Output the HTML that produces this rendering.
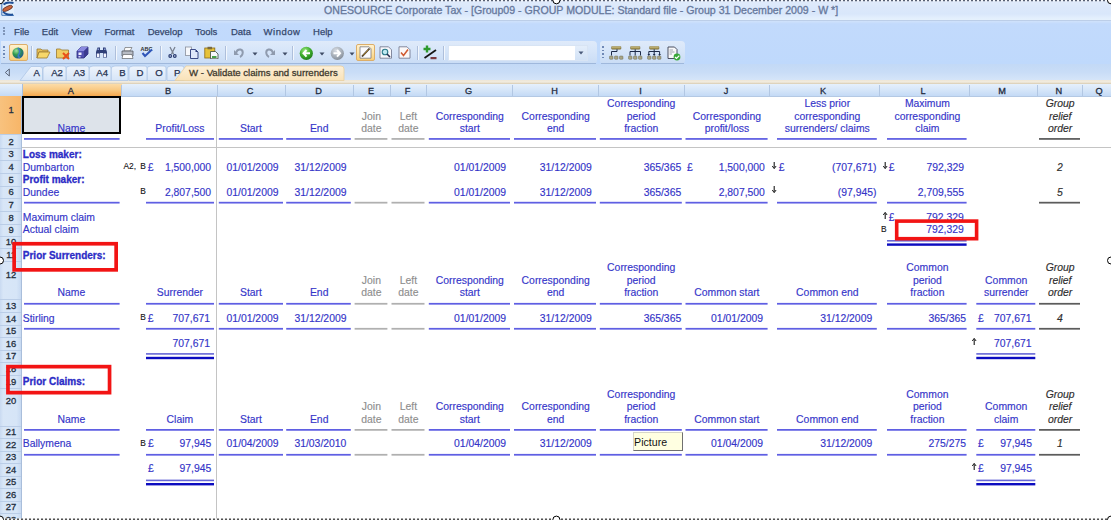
<!DOCTYPE html><html><head><meta charset="utf-8"><style>html,body{margin:0;padding:0}body{width:1111px;height:520px;position:relative;overflow:hidden;background:#fff;font-family:'Liberation Sans', sans-serif}</style></head><body>
<div style="position:absolute;left:0px;top:0px;width:1111px;height:20px;background:linear-gradient(#e0ebfb 0%,#dbe8fb 40%,#d9e7fb 70%,#e3effd 90%,#e6f1fd 100%);"></div>
<div style="position:absolute;left:0px;top:20px;width:1111px;height:1px;background:#bccee8;"></div>
<div style="position:absolute;left:0px;top:21px;width:1111px;height:43px;background:linear-gradient(#d0e2fb 0px,#c2dafc 3px,#bfd9fc 100%);"></div>
<div style="position:absolute;left:1px;top:41px;width:596px;height:23px;background:linear-gradient(#dfeafa 0%,#d6e5f9 45%,#c9dcf5 100%);border-radius:0 4px 4px 0;"></div>
<div style="position:absolute;left:1px;top:63px;width:595px;height:1px;background:#9fb8dc;"></div>
<div style="position:absolute;left:600px;top:41px;width:85px;height:23px;background:linear-gradient(#dfeafa 0%,#d6e5f9 45%,#c9dcf5 100%);border-radius:3px 4px 4px 3px;"></div>
<div style="position:absolute;left:601px;top:63px;width:83px;height:1px;background:#9fb8dc;"></div>
<div style="position:absolute;left:0px;top:64px;width:1111px;height:17px;background:linear-gradient(#c3d9f6 0%,#c9ddf7 50%,#d7e6f9 100%);"></div>
<div style="position:absolute;left:0px;top:80px;width:1111px;height:4px;background:linear-gradient(#eee6d6 0%,#f2ecdf 50%,#d8cbb0 100%);"></div>
<div style="position:absolute;top:0px;font:normal normal 10.6px 'Liberation Sans', sans-serif;line-height:20px;white-space:nowrap;color:#66789c;-webkit-text-stroke:0.3px #66789c;left:324.0px">ONESOURCE Corporate Tax - [Group09 - GROUP MODULE: Standard file - Group 31 December 2009 - W *]</div>
<svg style="position:absolute;left:0;top:0" width="18" height="18" viewBox="0 0 18 18">
<rect x="1.5" y="2" width="12.5" height="13.5" fill="#e4f0fb"/>
<path d="M1.8 2.5 V15.3 H14" stroke="#3f74b8" stroke-width="1" fill="none"/>
<path d="M3.5 4.5 Q7 1.5 13.5 3" stroke="#1e4f98" stroke-width="2" fill="none"/>
<path d="M3 11.5 Q6 15.5 13 14.5" stroke="#1e4f98" stroke-width="2" fill="none"/>
<ellipse cx="7.6" cy="8.4" rx="5.3" ry="2" transform="rotate(-25 7.6 8.4)" fill="#c8643c" stroke="#5a2a20" stroke-width="0.7"/>
</svg>
<div style="position:absolute;left:3px;top:27px;width:2px;height:2px;background:#7f95b8;"></div>
<div style="position:absolute;left:3px;top:30px;width:2px;height:2px;background:#7f95b8;"></div>
<div style="position:absolute;left:3px;top:33px;width:2px;height:2px;background:#7f95b8;"></div>
<div style="position:absolute;top:22px;font:normal normal 9.5px 'Liberation Sans', sans-serif;line-height:20px;white-space:nowrap;color:#34476c;-webkit-text-stroke:0.25px #34476c;left:14.1px">File</div>
<div style="position:absolute;top:22px;font:normal normal 9.5px 'Liberation Sans', sans-serif;line-height:20px;white-space:nowrap;color:#34476c;-webkit-text-stroke:0.25px #34476c;left:41.8px">Edit</div>
<div style="position:absolute;top:22px;font:normal normal 9.5px 'Liberation Sans', sans-serif;line-height:20px;white-space:nowrap;color:#34476c;-webkit-text-stroke:0.25px #34476c;left:71.4px">View</div>
<div style="position:absolute;top:22px;font:normal normal 9.5px 'Liberation Sans', sans-serif;line-height:20px;white-space:nowrap;color:#34476c;-webkit-text-stroke:0.25px #34476c;left:104.4px">Format</div>
<div style="position:absolute;top:22px;font:normal normal 9.5px 'Liberation Sans', sans-serif;line-height:20px;white-space:nowrap;color:#34476c;-webkit-text-stroke:0.25px #34476c;left:147.7px">Develop</div>
<div style="position:absolute;top:22px;font:normal normal 9.5px 'Liberation Sans', sans-serif;line-height:20px;white-space:nowrap;color:#34476c;-webkit-text-stroke:0.25px #34476c;left:195.2px">Tools</div>
<div style="position:absolute;top:22px;font:normal normal 9.5px 'Liberation Sans', sans-serif;line-height:20px;white-space:nowrap;color:#34476c;-webkit-text-stroke:0.25px #34476c;left:230.9px">Data</div>
<div style="position:absolute;top:22px;font:normal normal 9.5px 'Liberation Sans', sans-serif;line-height:20px;white-space:nowrap;color:#34476c;-webkit-text-stroke:0.25px #34476c;letter-spacing:0.5px;left:263.6px">Window</div>
<div style="position:absolute;top:22px;font:normal normal 9.5px 'Liberation Sans', sans-serif;line-height:20px;white-space:nowrap;color:#34476c;-webkit-text-stroke:0.25px #34476c;left:313.1px">Help</div>
<div style="position:absolute;left:3px;top:46px;width:2px;height:1.5px;background:#6f88b5;"></div>
<div style="position:absolute;left:3px;top:49.5px;width:2px;height:1.5px;background:#6f88b5;"></div>
<div style="position:absolute;left:3px;top:53px;width:2px;height:1.5px;background:#6f88b5;"></div>
<div style="position:absolute;left:3px;top:56.5px;width:2px;height:1.5px;background:#6f88b5;"></div>
<div style="position:absolute;left:602px;top:46px;width:2px;height:1.5px;background:#6f88b5;"></div>
<div style="position:absolute;left:602px;top:49.5px;width:2px;height:1.5px;background:#6f88b5;"></div>
<div style="position:absolute;left:602px;top:53px;width:2px;height:1.5px;background:#6f88b5;"></div>
<div style="position:absolute;left:602px;top:56.5px;width:2px;height:1.5px;background:#6f88b5;"></div>
<div style="position:absolute;left:30.5px;top:46px;width:1.0px;height:14px;background:#aebfdb;"></div>
<div style="position:absolute;left:31.5px;top:46px;width:1.0px;height:14px;background:#f2f7fd;"></div>
<div style="position:absolute;left:115px;top:46px;width:1px;height:14px;background:#aebfdb;"></div>
<div style="position:absolute;left:116px;top:46px;width:1px;height:14px;background:#f2f7fd;"></div>
<div style="position:absolute;left:160px;top:46px;width:1px;height:14px;background:#aebfdb;"></div>
<div style="position:absolute;left:161px;top:46px;width:1px;height:14px;background:#f2f7fd;"></div>
<div style="position:absolute;left:225px;top:46px;width:1px;height:14px;background:#aebfdb;"></div>
<div style="position:absolute;left:226px;top:46px;width:1px;height:14px;background:#f2f7fd;"></div>
<div style="position:absolute;left:291.5px;top:46px;width:1.0px;height:14px;background:#aebfdb;"></div>
<div style="position:absolute;left:292.5px;top:46px;width:1.0px;height:14px;background:#f2f7fd;"></div>
<div style="position:absolute;left:416.5px;top:46px;width:1.0px;height:14px;background:#aebfdb;"></div>
<div style="position:absolute;left:417.5px;top:46px;width:1.0px;height:14px;background:#f2f7fd;"></div>
<div style="position:absolute;left:442.5px;top:46px;width:1.0px;height:14px;background:#aebfdb;"></div>
<div style="position:absolute;left:443.5px;top:46px;width:1.0px;height:14px;background:#f2f7fd;"></div>
<div style="position:absolute;left:8.5px;top:44px;width:17.0px;height:15px;border:1px solid #dcae6a;border-radius:2px;background:linear-gradient(#fff1cf 0%,#fde3a6 50%,#f9cf78 100%)"></div>
<div style="position:absolute;left:356px;top:44px;width:16.5px;height:15px;border:1px solid #dcae6a;border-radius:2px;background:linear-gradient(#fff1cf 0%,#fde3a6 50%,#f9cf78 100%)"></div>
<svg style="position:absolute;left:12px;top:47px" width="12" height="12" viewBox="0 0 12 12"><defs><radialGradient id="g1" cx="0.35" cy="0.3" r="0.8"><stop offset="0" stop-color="#9fe0a0"/><stop offset="0.45" stop-color="#2f9a4a"/><stop offset="1" stop-color="#1d4f9a"/></radialGradient></defs><circle cx="6" cy="6" r="5.6" fill="url(#g1)"/><path d="M6 1 Q9 4 7 7 Q5 9 8 11" stroke="#3a7ac8" stroke-width="1.6" fill="none"/></svg>
<svg style="position:absolute;left:36px;top:47px" width="15" height="12" viewBox="0 0 15 12"><path d="M1 2 h4 l1 1 h6 v2 h-9 l-2 6 z" fill="#e9c25a" stroke="#9a7a30" stroke-width="0.8"/><path d="M3 5 h11 l-3 6 h-10 z" fill="#f7d76a" stroke="#9a7a30" stroke-width="0.8"/></svg>
<svg style="position:absolute;left:56px;top:47px" width="14" height="13" viewBox="0 0 14 13"><path d="M0.5 2 h4 l1 1 h7 v8 h-12 z" fill="#f0cd62" stroke="#9a7a30" stroke-width="0.8"/><path d="M7 6 l6 6 M13 6 l-6 6" stroke="#e8501a" stroke-width="2"/></svg>
<svg style="position:absolute;left:76px;top:46px" width="13" height="13" viewBox="0 0 13 13"><path d="M1 5 L5 1 H12 V8 L8 12 H1 Z" fill="#4f4fb0" stroke="#2c2c7a" stroke-width="0.8"/><path d="M5 1 H12 L8 5 H1 Z" fill="#8a8ae0"/><path d="M8 5 L12 1 V8 L8 12 Z" fill="#3a3a90"/><rect x="2.5" y="6.5" width="3" height="2.5" fill="#f0f0ff"/><rect x="2.5" y="10" width="2" height="1.5" fill="#d0d0f0"/></svg>
<svg style="position:absolute;left:95px;top:46px" width="13" height="13" viewBox="0 0 13 13"><path d="M1 11.5 V6 L2.5 1.5 H5 V11.5 Z M8 11.5 V1.5 H10.5 L12 6 V11.5 Z" fill="#2f3f78"/><rect x="5" y="4" width="3" height="3" fill="#2f3f78"/><rect x="1.8" y="7.5" width="2.6" height="3.5" fill="#f2f4ff"/><rect x="8.6" y="7.5" width="2.6" height="3.5" fill="#f2f4ff"/><rect x="2.5" y="2.5" width="1.5" height="1.5" fill="#8a9ad0"/><rect x="9" y="2.5" width="1.5" height="1.5" fill="#8a9ad0"/></svg>
<svg style="position:absolute;left:121px;top:47px" width="13" height="12" viewBox="0 0 13 12"><path d="M4 0.5 H11 L9 4 H3 Z" fill="#fafafa" stroke="#707070" stroke-width="0.7"/><path d="M1 4 H12 V9 H1 Z" fill="#b8bcc4" stroke="#505560" stroke-width="0.8"/><path d="M2 7.5 H11 L12 11.5 H1 Z" fill="#ffffff" stroke="#606468" stroke-width="0.7"/></svg>
<svg style="position:absolute;left:139px;top:45px" width="16" height="13" viewBox="0 0 16 13"><text x="1.5" y="5.5" font-size="5.5" font-family="Liberation Sans" font-weight="bold" fill="#303030">ABC</text><path d="M3.5 8 L6 11 L13 4.5" stroke="#2f55b8" stroke-width="2" fill="none"/></svg>
<svg style="position:absolute;left:167px;top:46px" width="11" height="13" viewBox="0 0 11 13"><path d="M3 1 L6.5 8 M8 1 L4.5 8" stroke="#7a8290" stroke-width="1.3"/><circle cx="3.2" cy="10" r="1.9" fill="#24376e"/><circle cx="7.8" cy="10" r="1.9" fill="#24376e"/><circle cx="3.2" cy="10" r="0.7" fill="#e8eefa"/><circle cx="7.8" cy="10" r="0.7" fill="#e8eefa"/></svg>
<svg style="position:absolute;left:185px;top:46px" width="14" height="13" viewBox="0 0 14 13"><rect x="0.5" y="1" width="6" height="8.5" fill="#f6f8fc" stroke="#8a909c" stroke-width="0.8"/><path d="M5.5 3.5 H10.5 L13 6 V12.5 H5.5 Z" fill="#dfe8fb" stroke="#2a3a7a" stroke-width="0.9"/><path d="M10.5 3.5 V6 H13" fill="#2a3a7a"/></svg>
<svg style="position:absolute;left:204px;top:46px" width="15" height="13" viewBox="0 0 15 13"><rect x="0.8" y="2" width="10" height="10" fill="#e6c23a" stroke="#8a6a18" stroke-width="0.8"/><rect x="3.5" y="0.8" width="4.5" height="2.5" fill="#7a6a40"/><path d="M6.5 5.5 H11.5 L14 8 V12.8 H6.5 Z" fill="#f8f8fc" stroke="#3a4a3a" stroke-width="0.8"/><rect x="8" y="10" width="4.5" height="2" fill="#48a048"/></svg>
<svg style="position:absolute;left:233px;top:47px" width="12" height="11" viewBox="0 0 12 11"><path d="M3 6 Q4 2 7.5 2.5 Q10.5 3.5 9.5 7 Q9 9 7 10" stroke="#8f9bae" stroke-width="2" fill="none"/><path d="M1 3 V8 H6 Z" fill="#8f9bae"/></svg>
<svg style="position:absolute;left:264px;top:47px" width="12" height="11" viewBox="0 0 12 11"><path d="M9 6 Q8 2 4.5 2.5 Q1.5 3.5 2.5 7 Q3 9 5 10" stroke="#8f9bae" stroke-width="2" fill="none"/><path d="M11 3 V8 H6 Z" fill="#8f9bae"/></svg>
<svg style="position:absolute;left:251.5px;top:51.5px" width="6" height="4" viewBox="0 0 6 4"><path d="M0.5 0.5 h5 l-2.5 3 z" fill="#3f4c66"/></svg>
<svg style="position:absolute;left:282px;top:51.5px" width="6" height="4" viewBox="0 0 6 4"><path d="M0.5 0.5 h5 l-2.5 3 z" fill="#3f4c66"/></svg>
<svg style="position:absolute;left:318.5px;top:51.5px" width="6" height="4" viewBox="0 0 6 4"><path d="M0.5 0.5 h5 l-2.5 3 z" fill="#3f4c66"/></svg>
<svg style="position:absolute;left:348.5px;top:51.5px" width="6" height="4" viewBox="0 0 6 4"><path d="M0.5 0.5 h5 l-2.5 3 z" fill="#3f4c66"/></svg>
<svg style="position:absolute;left:299px;top:45.5px" width="15" height="15" viewBox="0 0 15 15"><defs><radialGradient id="gb" cx="0.4" cy="0.3" r="0.8"><stop offset="0" stop-color="#9ae87a"/><stop offset="0.55" stop-color="#3aa82a"/><stop offset="1" stop-color="#1a6e16"/></radialGradient></defs><circle cx="7.3" cy="7.3" r="6.6" fill="url(#gb)"/><path d="M7.5 4 L4.5 7.3 L7.5 10.6 M4.8 7.3 H11" stroke="#fff" stroke-width="2" fill="none"/></svg>
<svg style="position:absolute;left:329.5px;top:45.5px" width="15" height="15" viewBox="0 0 15 15"><defs><radialGradient id="gf" cx="0.4" cy="0.3" r="0.8"><stop offset="0" stop-color="#d8dde4"/><stop offset="0.6" stop-color="#a2aab4"/><stop offset="1" stop-color="#7c848e"/></radialGradient></defs><circle cx="7.3" cy="7.3" r="6.6" fill="url(#gf)"/><path d="M7 4 L10 7.3 L7 10.6 M9.7 7.3 H3.5" stroke="#fff" stroke-width="2" fill="none"/></svg>
<svg style="position:absolute;left:359px;top:46px" width="13" height="13" viewBox="0 0 13 13"><path d="M1 0.8 H10 L12 2.8 V12.2 H1 Z" fill="#fbfbfd" stroke="#7a7a80" stroke-width="0.8"/><path d="M3 10.5 L10.5 2.5" stroke="#3a3020" stroke-width="1.8"/><path d="M4 9.5 L9.5 3.5" stroke="#e8b040" stroke-width="0.7"/></svg>
<svg style="position:absolute;left:378.5px;top:46px" width="14" height="13" viewBox="0 0 14 13"><path d="M1 0.8 H9.5 L12.5 3.8 V12.2 H1 Z" fill="#f8f8fc" stroke="#6a7088" stroke-width="0.8"/><circle cx="6" cy="6" r="2.8" fill="#bfe8f0" stroke="#2a7a8a" stroke-width="1.1"/><path d="M8 8 L11 11" stroke="#2a3050" stroke-width="1.6"/></svg>
<svg style="position:absolute;left:398px;top:46px" width="13" height="13" viewBox="0 0 13 13"><path d="M1 0.8 H9 L12 3.8 V12.2 H1 Z" fill="#fbf8f8" stroke="#6a7088" stroke-width="0.8"/><path d="M3 6.5 L5.5 9.5 L10 3.5" stroke="#d05a30" stroke-width="1.5" fill="none"/></svg>
<svg style="position:absolute;left:422px;top:45px" width="16" height="15" viewBox="0 0 16 15"><path d="M1.5 4 H8.5 M5 0.5 V7.5" stroke="#2e9a2e" stroke-width="2.4"/><path d="M2.5 13 L14 5" stroke="#151515" stroke-width="1.8"/><rect x="8.5" y="12" width="6" height="2.2" fill="#7a3a40"/></svg>
<div style="position:absolute;left:448px;top:45px;width:140px;height:16px;background:#ffffff;border:1px solid #d8e4f4;box-sizing:border-box;"></div>
<div style="position:absolute;left:575px;top:46px;width:12px;height:14px;background:linear-gradient(#e4eefb,#d2e2f6);"></div>
<svg style="position:absolute;left:578px;top:51px" width="6" height="4" viewBox="0 0 6 4"><path d="M0.5 0.5 h5 l-2.5 3 z" fill="#4a5a7a"/></svg>
<svg style="position:absolute;left:609px;top:46px" width="15" height="14" viewBox="0 0 15 14"><defs><linearGradient id="hg" x1="0" y1="0" x2="0" y2="1"><stop offset="0" stop-color="#d8cc90"/><stop offset="1" stop-color="#8a7a3a"/></linearGradient></defs><rect x="2.5" y="0.3" width="9.5" height="3" rx="0.8" fill="url(#hg)" stroke="#6a5a28" stroke-width="0.4"/><path d="M8 3.3 V5.5 H2.5 V9.5" stroke="#1c2a48" stroke-width="1" fill="none"/><rect x="0.5" y="10" width="3.5" height="3.3" rx="0.8" fill="#a8a486" stroke="#5a5a40" stroke-width="0.4"/><rect x="5.5" y="10" width="3.5" height="3.3" rx="0.8" fill="#a8a486" stroke="#5a5a40" stroke-width="0.4"/><rect x="10.5" y="10" width="3.5" height="3.3" rx="0.8" fill="#a8a486" stroke="#5a5a40" stroke-width="0.4"/></svg>
<svg style="position:absolute;left:628px;top:46px" width="15" height="14" viewBox="0 0 15 14"><defs><linearGradient id="hg" x1="0" y1="0" x2="0" y2="1"><stop offset="0" stop-color="#d8cc90"/><stop offset="1" stop-color="#8a7a3a"/></linearGradient></defs><rect x="2.5" y="0.3" width="9.5" height="3" rx="0.8" fill="url(#hg)" stroke="#6a5a28" stroke-width="0.4"/><path d="M7.2 3.3 V9.5 M2 9.5 V5.5 H12.5 V9.5" stroke="#1c2a48" stroke-width="1" fill="none"/><rect x="0.5" y="10" width="3.5" height="3.3" rx="0.8" fill="#a8a486" stroke="#5a5a40" stroke-width="0.4"/><rect x="5.5" y="10" width="3.5" height="3.3" rx="0.8" fill="#a8a486" stroke="#5a5a40" stroke-width="0.4"/><rect x="10.5" y="10" width="3.5" height="3.3" rx="0.8" fill="#a8a486" stroke="#5a5a40" stroke-width="0.4"/></svg>
<svg style="position:absolute;left:647px;top:46px" width="15" height="14" viewBox="0 0 15 14"><defs><linearGradient id="hg" x1="0" y1="0" x2="0" y2="1"><stop offset="0" stop-color="#d8cc90"/><stop offset="1" stop-color="#8a7a3a"/></linearGradient></defs><rect x="2.5" y="0.3" width="9.5" height="3" rx="0.8" fill="url(#hg)" stroke="#6a5a28" stroke-width="0.4"/><path d="M7.2 3.3 V9 M1.8 9 V5.5 H12.6 V9" stroke="#1c2a48" stroke-width="1" fill="none"/><path d="M0.5 8 L1.8 10 L3.1 8 M5.9 8 L7.2 10 L8.5 8 M11.3 8 L12.6 10 L13.9 8" fill="#1c2a48"/><rect x="0.5" y="10" width="3.5" height="3.3" rx="0.8" fill="#a8a486" stroke="#5a5a40" stroke-width="0.4"/><rect x="5.5" y="10" width="3.5" height="3.3" rx="0.8" fill="#a8a486" stroke="#5a5a40" stroke-width="0.4"/><rect x="10.5" y="10" width="3.5" height="3.3" rx="0.8" fill="#a8a486" stroke="#5a5a40" stroke-width="0.4"/></svg>
<svg style="position:absolute;left:667px;top:45.5px" width="14" height="15" viewBox="0 0 14 15"><path d="M1 1 H7.5 L10 3.5 V12.5 H1 Z" fill="#f8f8fa" stroke="#3a4050" stroke-width="0.9"/><path d="M2.5 4 H6 M2.5 6 H7.5 M2.5 8 H5" stroke="#8a90a0" stroke-width="0.8"/><circle cx="10" cy="11" r="3.4" fill="#38a838"/><path d="M8 11 L9.5 12.5 L12.3 9.6" stroke="#fff" stroke-width="1.2" fill="none"/></svg>
<svg style="position:absolute;left:0;top:64px" width="360" height="17" viewBox="0 64 360 17"><defs><linearGradient id="tg" x1="0" y1="0" x2="0" y2="1"><stop offset="0" stop-color="#eef4fc"/><stop offset="1" stop-color="#d6e5f8"/></linearGradient><linearGradient id="ta" x1="0" y1="0" x2="0" y2="1"><stop offset="0" stop-color="#fdf0d8"/><stop offset="1" stop-color="#f9e2b8"/></linearGradient></defs><path d="M167 80.5 V69 Q167 66 171 66 H182 Q184 66 184 68 V80.5 Z" fill="url(#tg)" stroke="#aec6e6" stroke-width="0.8"/><path d="M147 80.5 V69 Q147 66 151 66 H164 Q166 66 166 68 V80.5 Z" fill="url(#tg)" stroke="#aec6e6" stroke-width="0.8"/><path d="M129 80.5 V69 Q129 66 133 66 H145 Q147 66 147 68 V80.5 Z" fill="url(#tg)" stroke="#aec6e6" stroke-width="0.8"/><path d="M111 80.5 V69 Q111 66 115 66 H126 Q128 66 128 68 V80.5 Z" fill="url(#tg)" stroke="#aec6e6" stroke-width="0.8"/><path d="M89 80.5 V69 Q89 66 93 66 H109 Q111 66 111 68 V80.5 Z" fill="url(#tg)" stroke="#aec6e6" stroke-width="0.8"/><path d="M66 80.5 V69 Q66 66 70 66 H87 Q89 66 89 68 V80.5 Z" fill="url(#tg)" stroke="#aec6e6" stroke-width="0.8"/><path d="M43 80.5 V69 Q43 66 47 66 H64 Q66 66 66 68 V80.5 Z" fill="url(#tg)" stroke="#aec6e6" stroke-width="0.8"/><path d="M20 80.5 L31 66.5 H40 Q42.5 66.5 42.5 69 V80.5 Z" fill="url(#tg)" stroke="#aec6e6" stroke-width="0.8"/><path d="M175 80.5 L186 66 H341 Q344 66 344 69 V80.5 Z" fill="url(#ta)" stroke="#e8cfa0" stroke-width="0.8"/><path d="M5.3 72.5 L9.3 69 V76 Z" fill="none" stroke="#5a6478" stroke-width="1"/></svg>
<div style="position:absolute;top:63px;font:normal normal 9.6px 'Liberation Sans', sans-serif;line-height:20px;white-space:nowrap;color:#25304f;-webkit-text-stroke:0.25px #25304f;left:33.6px">A</div>
<div style="position:absolute;top:63px;font:normal normal 9.6px 'Liberation Sans', sans-serif;line-height:20px;white-space:nowrap;color:#25304f;-webkit-text-stroke:0.25px #25304f;left:51.2px">A2</div>
<div style="position:absolute;top:63px;font:normal normal 9.6px 'Liberation Sans', sans-serif;line-height:20px;white-space:nowrap;color:#25304f;-webkit-text-stroke:0.25px #25304f;left:73.4px">A3</div>
<div style="position:absolute;top:63px;font:normal normal 9.6px 'Liberation Sans', sans-serif;line-height:20px;white-space:nowrap;color:#25304f;-webkit-text-stroke:0.25px #25304f;left:96.3px">A4</div>
<div style="position:absolute;top:63px;font:normal normal 9.6px 'Liberation Sans', sans-serif;line-height:20px;white-space:nowrap;color:#25304f;-webkit-text-stroke:0.25px #25304f;left:119.3px">B</div>
<div style="position:absolute;top:63px;font:normal normal 9.6px 'Liberation Sans', sans-serif;line-height:20px;white-space:nowrap;color:#25304f;-webkit-text-stroke:0.25px #25304f;left:136.4px">D</div>
<div style="position:absolute;top:63px;font:normal normal 9.6px 'Liberation Sans', sans-serif;line-height:20px;white-space:nowrap;color:#25304f;-webkit-text-stroke:0.25px #25304f;left:155.2px">O</div>
<div style="position:absolute;top:63px;font:normal normal 9.6px 'Liberation Sans', sans-serif;line-height:20px;white-space:nowrap;color:#25304f;-webkit-text-stroke:0.25px #25304f;left:174.0px">P</div>
<div style="position:absolute;top:63px;font:normal normal 9.6px 'Liberation Sans', sans-serif;line-height:20px;white-space:nowrap;color:#3f3a2e;-webkit-text-stroke:0.3px #3f3a2e;left:189.1px">W - Validate claims and surrenders</div>
<div style="position:absolute;left:0px;top:84px;width:1111px;height:12px;background:linear-gradient(#e6f0fc 0%,#d6e6f9 50%,#c4daf6 100%);"></div>
<div style="position:absolute;left:0px;top:84px;width:22px;height:12px;background:linear-gradient(#e6f0fc 0%,#d6e6f9 50%,#c4daf6 100%);"></div>
<div style="position:absolute;left:22px;top:84px;width:99.5px;height:12px;background:linear-gradient(#fbdca8 0%,#f9c982 50%,#f6a84e 100%);"></div>
<div style="position:absolute;left:121.0px;top:85px;width:1.0px;height:11px;background:#b2c7e3;"></div>
<div style="position:absolute;top:81px;font:normal normal 9.2px 'Liberation Sans', sans-serif;line-height:20px;white-space:nowrap;color:#1f2b40;-webkit-text-stroke:0.3px #1f2b40;left:70.8px;transform:translateX(-50%)">A</div>
<div style="position:absolute;left:216.5px;top:85px;width:1.0px;height:11px;background:#b2c7e3;"></div>
<div style="position:absolute;top:81px;font:normal normal 9.2px 'Liberation Sans', sans-serif;line-height:20px;white-space:nowrap;color:#1f2b40;-webkit-text-stroke:0.3px #1f2b40;left:168.2px;transform:translateX(-50%)">B</div>
<div style="position:absolute;left:285.0px;top:85px;width:1.0px;height:11px;background:#b2c7e3;"></div>
<div style="position:absolute;top:81px;font:normal normal 9.2px 'Liberation Sans', sans-serif;line-height:20px;white-space:nowrap;color:#1f2b40;-webkit-text-stroke:0.3px #1f2b40;left:250.2px;transform:translateX(-50%)">C</div>
<div style="position:absolute;left:353.0px;top:85px;width:1.0px;height:11px;background:#b2c7e3;"></div>
<div style="position:absolute;top:81px;font:normal normal 9.2px 'Liberation Sans', sans-serif;line-height:20px;white-space:nowrap;color:#1f2b40;-webkit-text-stroke:0.3px #1f2b40;left:318.5px;transform:translateX(-50%)">D</div>
<div style="position:absolute;left:390.0px;top:85px;width:1.0px;height:11px;background:#b2c7e3;"></div>
<div style="position:absolute;top:81px;font:normal normal 9.2px 'Liberation Sans', sans-serif;line-height:20px;white-space:nowrap;color:#1f2b40;-webkit-text-stroke:0.3px #1f2b40;left:371.0px;transform:translateX(-50%)">E</div>
<div style="position:absolute;left:426.0px;top:85px;width:1.0px;height:11px;background:#b2c7e3;"></div>
<div style="position:absolute;top:81px;font:normal normal 9.2px 'Liberation Sans', sans-serif;line-height:20px;white-space:nowrap;color:#1f2b40;-webkit-text-stroke:0.3px #1f2b40;left:407.5px;transform:translateX(-50%)">F</div>
<div style="position:absolute;left:512.0px;top:85px;width:1.0px;height:11px;background:#b2c7e3;"></div>
<div style="position:absolute;top:81px;font:normal normal 9.2px 'Liberation Sans', sans-serif;line-height:20px;white-space:nowrap;color:#1f2b40;-webkit-text-stroke:0.3px #1f2b40;left:468.5px;transform:translateX(-50%)">G</div>
<div style="position:absolute;left:598.0px;top:85px;width:1.0px;height:11px;background:#b2c7e3;"></div>
<div style="position:absolute;top:81px;font:normal normal 9.2px 'Liberation Sans', sans-serif;line-height:20px;white-space:nowrap;color:#1f2b40;-webkit-text-stroke:0.3px #1f2b40;left:554.5px;transform:translateX(-50%)">H</div>
<div style="position:absolute;left:684.0px;top:85px;width:1.0px;height:11px;background:#b2c7e3;"></div>
<div style="position:absolute;top:81px;font:normal normal 9.2px 'Liberation Sans', sans-serif;line-height:20px;white-space:nowrap;color:#1f2b40;-webkit-text-stroke:0.3px #1f2b40;left:640.5px;transform:translateX(-50%)">I</div>
<div style="position:absolute;left:769.0px;top:85px;width:1.0px;height:11px;background:#b2c7e3;"></div>
<div style="position:absolute;top:81px;font:normal normal 9.2px 'Liberation Sans', sans-serif;line-height:20px;white-space:nowrap;color:#1f2b40;-webkit-text-stroke:0.3px #1f2b40;left:726.0px;transform:translateX(-50%)">J</div>
<div style="position:absolute;left:878.5px;top:85px;width:1.0px;height:11px;background:#b2c7e3;"></div>
<div style="position:absolute;top:81px;font:normal normal 9.2px 'Liberation Sans', sans-serif;line-height:20px;white-space:nowrap;color:#1f2b40;-webkit-text-stroke:0.3px #1f2b40;left:823.2px;transform:translateX(-50%)">K</div>
<div style="position:absolute;left:968.5px;top:85px;width:1.0px;height:11px;background:#b2c7e3;"></div>
<div style="position:absolute;top:81px;font:normal normal 9.2px 'Liberation Sans', sans-serif;line-height:20px;white-space:nowrap;color:#1f2b40;-webkit-text-stroke:0.3px #1f2b40;left:923.0px;transform:translateX(-50%)">L</div>
<div style="position:absolute;left:1036.5px;top:85px;width:1.0px;height:11px;background:#b2c7e3;"></div>
<div style="position:absolute;top:81px;font:normal normal 9.2px 'Liberation Sans', sans-serif;line-height:20px;white-space:nowrap;color:#1f2b40;-webkit-text-stroke:0.3px #1f2b40;left:1002.0px;transform:translateX(-50%)">M</div>
<div style="position:absolute;left:1082.0px;top:85px;width:1.0px;height:11px;background:#b2c7e3;"></div>
<div style="position:absolute;top:81px;font:normal normal 9.2px 'Liberation Sans', sans-serif;line-height:20px;white-space:nowrap;color:#1f2b40;-webkit-text-stroke:0.3px #1f2b40;left:1058.8px;transform:translateX(-50%)">N</div>
<div style="position:absolute;left:1110.5px;top:85px;width:1.0px;height:11px;background:#b2c7e3;"></div>
<div style="position:absolute;top:81px;font:normal normal 9.2px 'Liberation Sans', sans-serif;line-height:20px;white-space:nowrap;color:#1f2b40;-webkit-text-stroke:0.3px #1f2b40;left:1099.0px;transform:translateX(-50%)">Q</div>
<div style="position:absolute;left:21.5px;top:84px;width:1.0px;height:12px;background:#a9bfdc;"></div>
<div style="position:absolute;left:0px;top:95.5px;width:1111px;height:0.7999999999999972px;background:#b4c9e4;"></div>
<div style="position:absolute;left:0px;top:96px;width:22px;height:424px;background:linear-gradient(90deg,#c9daf1 0%,#d8e6f7 15%,#d6e5f7 75%,#c4d7f0 100%);"></div>
<div style="position:absolute;left:0px;top:96px;width:22px;height:38px;background:linear-gradient(90deg,#f8c27e 0%,#f7b567 100%);"></div>
<div style="position:absolute;left:0px;top:133.5px;width:22px;height:1.0px;background:#bacde7;"></div>
<div style="position:absolute;top:100px;font:normal normal 9.4px 'Liberation Sans', sans-serif;line-height:20px;white-space:nowrap;color:#243040;-webkit-text-stroke:0.3px #243040;left:11.0px;transform:translateX(-50%)">1</div>
<div style="position:absolute;left:0px;top:147.5px;width:22px;height:1.0px;background:#bacde7;"></div>
<div style="position:absolute;top:132px;font:normal normal 9.4px 'Liberation Sans', sans-serif;line-height:20px;white-space:nowrap;color:#243040;-webkit-text-stroke:0.3px #243040;left:11.0px;transform:translateX(-50%)">2</div>
<div style="position:absolute;left:0px;top:159.5px;width:22px;height:1.0px;background:#bacde7;"></div>
<div style="position:absolute;top:144px;font:normal normal 9.4px 'Liberation Sans', sans-serif;line-height:20px;white-space:nowrap;color:#243040;-webkit-text-stroke:0.3px #243040;left:11.0px;transform:translateX(-50%)">3</div>
<div style="position:absolute;left:0px;top:172.5px;width:22px;height:1.0px;background:#bacde7;"></div>
<div style="position:absolute;top:157px;font:normal normal 9.4px 'Liberation Sans', sans-serif;line-height:20px;white-space:nowrap;color:#243040;-webkit-text-stroke:0.3px #243040;left:11.0px;transform:translateX(-50%)">4</div>
<div style="position:absolute;left:0px;top:185.5px;width:22px;height:1.0px;background:#bacde7;"></div>
<div style="position:absolute;top:170px;font:normal normal 9.4px 'Liberation Sans', sans-serif;line-height:20px;white-space:nowrap;color:#243040;-webkit-text-stroke:0.3px #243040;left:11.0px;transform:translateX(-50%)">5</div>
<div style="position:absolute;left:0px;top:197.5px;width:22px;height:1.0px;background:#bacde7;"></div>
<div style="position:absolute;top:182px;font:normal normal 9.4px 'Liberation Sans', sans-serif;line-height:20px;white-space:nowrap;color:#243040;-webkit-text-stroke:0.3px #243040;left:11.0px;transform:translateX(-50%)">6</div>
<div style="position:absolute;left:0px;top:210.5px;width:22px;height:1.0px;background:#bacde7;"></div>
<div style="position:absolute;top:195px;font:normal normal 9.4px 'Liberation Sans', sans-serif;line-height:20px;white-space:nowrap;color:#243040;-webkit-text-stroke:0.3px #243040;left:11.0px;transform:translateX(-50%)">7</div>
<div style="position:absolute;left:0px;top:223.5px;width:22px;height:1.0px;background:#bacde7;"></div>
<div style="position:absolute;top:208px;font:normal normal 9.4px 'Liberation Sans', sans-serif;line-height:20px;white-space:nowrap;color:#243040;-webkit-text-stroke:0.3px #243040;left:11.0px;transform:translateX(-50%)">8</div>
<div style="position:absolute;left:0px;top:235.5px;width:22px;height:1.0px;background:#bacde7;"></div>
<div style="position:absolute;top:220px;font:normal normal 9.4px 'Liberation Sans', sans-serif;line-height:20px;white-space:nowrap;color:#243040;-webkit-text-stroke:0.3px #243040;left:11.0px;transform:translateX(-50%)">9</div>
<div style="position:absolute;left:0px;top:247.5px;width:22px;height:1.0px;background:#bacde7;"></div>
<div style="position:absolute;top:232px;font:normal normal 9.4px 'Liberation Sans', sans-serif;line-height:20px;white-space:nowrap;color:#243040;-webkit-text-stroke:0.3px #243040;left:11.0px;transform:translateX(-50%)">10</div>
<div style="position:absolute;left:0px;top:260.5px;width:22px;height:1.0px;background:#bacde7;"></div>
<div style="position:absolute;top:245px;font:normal normal 9.4px 'Liberation Sans', sans-serif;line-height:20px;white-space:nowrap;color:#243040;-webkit-text-stroke:0.3px #243040;left:11.0px;transform:translateX(-50%)">11</div>
<div style="position:absolute;left:0px;top:298.5px;width:22px;height:1.0px;background:#bacde7;"></div>
<div style="position:absolute;top:265px;font:normal normal 9.4px 'Liberation Sans', sans-serif;line-height:20px;white-space:nowrap;color:#243040;-webkit-text-stroke:0.3px #243040;left:11.0px;transform:translateX(-50%)">12</div>
<div style="position:absolute;left:0px;top:311.5px;width:22px;height:1.0px;background:#bacde7;"></div>
<div style="position:absolute;top:296px;font:normal normal 9.4px 'Liberation Sans', sans-serif;line-height:20px;white-space:nowrap;color:#243040;-webkit-text-stroke:0.3px #243040;left:11.0px;transform:translateX(-50%)">13</div>
<div style="position:absolute;left:0px;top:324.5px;width:22px;height:1.0px;background:#bacde7;"></div>
<div style="position:absolute;top:309px;font:normal normal 9.4px 'Liberation Sans', sans-serif;line-height:20px;white-space:nowrap;color:#243040;-webkit-text-stroke:0.3px #243040;left:11.0px;transform:translateX(-50%)">14</div>
<div style="position:absolute;left:0px;top:336.5px;width:22px;height:1.0px;background:#bacde7;"></div>
<div style="position:absolute;top:321px;font:normal normal 9.4px 'Liberation Sans', sans-serif;line-height:20px;white-space:nowrap;color:#243040;-webkit-text-stroke:0.3px #243040;left:11.0px;transform:translateX(-50%)">15</div>
<div style="position:absolute;left:0px;top:349.5px;width:22px;height:1.0px;background:#bacde7;"></div>
<div style="position:absolute;top:334px;font:normal normal 9.4px 'Liberation Sans', sans-serif;line-height:20px;white-space:nowrap;color:#243040;-webkit-text-stroke:0.3px #243040;left:11.0px;transform:translateX(-50%)">16</div>
<div style="position:absolute;left:0px;top:361.5px;width:22px;height:1.0px;background:#bacde7;"></div>
<div style="position:absolute;top:346px;font:normal normal 9.4px 'Liberation Sans', sans-serif;line-height:20px;white-space:nowrap;color:#243040;-webkit-text-stroke:0.3px #243040;left:11.0px;transform:translateX(-50%)">17</div>
<div style="position:absolute;left:0px;top:374.5px;width:22px;height:1.0px;background:#bacde7;"></div>
<div style="position:absolute;top:359px;font:normal normal 9.4px 'Liberation Sans', sans-serif;line-height:20px;white-space:nowrap;color:#243040;-webkit-text-stroke:0.3px #243040;left:11.0px;transform:translateX(-50%)">18</div>
<div style="position:absolute;left:0px;top:387.5px;width:22px;height:1.0px;background:#bacde7;"></div>
<div style="position:absolute;top:372px;font:normal normal 9.4px 'Liberation Sans', sans-serif;line-height:20px;white-space:nowrap;color:#243040;-webkit-text-stroke:0.3px #243040;left:11.0px;transform:translateX(-50%)">19</div>
<div style="position:absolute;left:0px;top:425.5px;width:22px;height:1.0px;background:#bacde7;"></div>
<div style="position:absolute;top:391px;font:normal normal 9.4px 'Liberation Sans', sans-serif;line-height:20px;white-space:nowrap;color:#243040;-webkit-text-stroke:0.3px #243040;left:11.0px;transform:translateX(-50%)">20</div>
<div style="position:absolute;left:0px;top:437.5px;width:22px;height:1.0px;background:#bacde7;"></div>
<div style="position:absolute;top:422px;font:normal normal 9.4px 'Liberation Sans', sans-serif;line-height:20px;white-space:nowrap;color:#243040;-webkit-text-stroke:0.3px #243040;left:11.0px;transform:translateX(-50%)">21</div>
<div style="position:absolute;left:0px;top:450.5px;width:22px;height:1.0px;background:#bacde7;"></div>
<div style="position:absolute;top:435px;font:normal normal 9.4px 'Liberation Sans', sans-serif;line-height:20px;white-space:nowrap;color:#243040;-webkit-text-stroke:0.3px #243040;left:11.0px;transform:translateX(-50%)">22</div>
<div style="position:absolute;left:0px;top:462.5px;width:22px;height:1.0px;background:#bacde7;"></div>
<div style="position:absolute;top:447px;font:normal normal 9.4px 'Liberation Sans', sans-serif;line-height:20px;white-space:nowrap;color:#243040;-webkit-text-stroke:0.3px #243040;left:11.0px;transform:translateX(-50%)">23</div>
<div style="position:absolute;left:0px;top:475.5px;width:22px;height:1.0px;background:#bacde7;"></div>
<div style="position:absolute;top:460px;font:normal normal 9.4px 'Liberation Sans', sans-serif;line-height:20px;white-space:nowrap;color:#243040;-webkit-text-stroke:0.3px #243040;left:11.0px;transform:translateX(-50%)">24</div>
<div style="position:absolute;left:0px;top:487.5px;width:22px;height:1.0px;background:#bacde7;"></div>
<div style="position:absolute;top:472px;font:normal normal 9.4px 'Liberation Sans', sans-serif;line-height:20px;white-space:nowrap;color:#243040;-webkit-text-stroke:0.3px #243040;left:11.0px;transform:translateX(-50%)">25</div>
<div style="position:absolute;left:0px;top:500.5px;width:22px;height:1.0px;background:#bacde7;"></div>
<div style="position:absolute;top:485px;font:normal normal 9.4px 'Liberation Sans', sans-serif;line-height:20px;white-space:nowrap;color:#243040;-webkit-text-stroke:0.3px #243040;left:11.0px;transform:translateX(-50%)">26</div>
<div style="position:absolute;left:0px;top:512.5px;width:22px;height:1.0px;background:#bacde7;"></div>
<div style="position:absolute;top:497px;font:normal normal 9.4px 'Liberation Sans', sans-serif;line-height:20px;white-space:nowrap;color:#243040;-webkit-text-stroke:0.3px #243040;left:11.0px;transform:translateX(-50%)">27</div>
<div style="position:absolute;left:0px;top:525.5px;width:22px;height:1.0px;background:#bacde7;"></div>
<div style="position:absolute;top:510px;font:normal normal 9.4px 'Liberation Sans', sans-serif;line-height:20px;white-space:nowrap;color:#243040;-webkit-text-stroke:0.3px #243040;left:11.0px;transform:translateX(-50%)">28</div>
<div style="position:absolute;left:21px;top:96px;width:1px;height:424px;background:#a9bedb;"></div>
<div style="position:absolute;left:216px;top:96px;width:1px;height:424px;background:#c4c4c4;"></div>
<div style="position:absolute;left:22px;top:147px;width:1089px;height:1px;background:#c4c4c4;"></div>
<div style="position:absolute;left:22px;top:96px;width:99px;height:38px;background:#dde3ea;"></div>
<div style="position:absolute;left:22px;top:96px;width:95px;height:34px;border:2px solid #000;"></div>
<div style="position:absolute;top:119px;font:normal normal 10.4px 'Liberation Sans', sans-serif;line-height:20px;white-space:nowrap;color:#3535c9;-webkit-text-stroke:0.15px #3535c9;left:71.3px;transform:translateX(-50%)">Name</div>
<div style="position:absolute;top:119px;font:normal normal 10.4px 'Liberation Sans', sans-serif;line-height:20px;white-space:nowrap;color:#3535c9;-webkit-text-stroke:0.15px #3535c9;left:179.9px;transform:translateX(-50%)">Profit/Loss</div>
<div style="position:absolute;top:119px;font:normal normal 10.4px 'Liberation Sans', sans-serif;line-height:20px;white-space:nowrap;color:#3535c9;-webkit-text-stroke:0.15px #3535c9;left:251.0px;transform:translateX(-50%)">Start</div>
<div style="position:absolute;top:119px;font:normal normal 10.4px 'Liberation Sans', sans-serif;line-height:20px;white-space:nowrap;color:#3535c9;-webkit-text-stroke:0.15px #3535c9;left:319.2px;transform:translateX(-50%)">End</div>
<div style="position:absolute;top:107px;font:normal normal 10.4px 'Liberation Sans', sans-serif;line-height:20px;white-space:nowrap;color:#8e8e8e;-webkit-text-stroke:0.15px #8e8e8e;left:371.4px;transform:translateX(-50%)">Join</div>
<div style="position:absolute;top:119px;font:normal normal 10.4px 'Liberation Sans', sans-serif;line-height:20px;white-space:nowrap;color:#8e8e8e;-webkit-text-stroke:0.15px #8e8e8e;left:371.4px;transform:translateX(-50%)">date</div>
<div style="position:absolute;top:107px;font:normal normal 10.4px 'Liberation Sans', sans-serif;line-height:20px;white-space:nowrap;color:#8e8e8e;-webkit-text-stroke:0.15px #8e8e8e;left:408.4px;transform:translateX(-50%)">Left</div>
<div style="position:absolute;top:119px;font:normal normal 10.4px 'Liberation Sans', sans-serif;line-height:20px;white-space:nowrap;color:#8e8e8e;-webkit-text-stroke:0.15px #8e8e8e;left:408.4px;transform:translateX(-50%)">date</div>
<div style="position:absolute;top:107px;font:normal normal 10.4px 'Liberation Sans', sans-serif;line-height:20px;white-space:nowrap;color:#3535c9;-webkit-text-stroke:0.15px #3535c9;left:469.8px;transform:translateX(-50%)">Corresponding</div>
<div style="position:absolute;top:119px;font:normal normal 10.4px 'Liberation Sans', sans-serif;line-height:20px;white-space:nowrap;color:#3535c9;-webkit-text-stroke:0.15px #3535c9;left:469.8px;transform:translateX(-50%)">start</div>
<div style="position:absolute;top:107px;font:normal normal 10.4px 'Liberation Sans', sans-serif;line-height:20px;white-space:nowrap;color:#3535c9;-webkit-text-stroke:0.15px #3535c9;left:555.7px;transform:translateX(-50%)">Corresponding</div>
<div style="position:absolute;top:119px;font:normal normal 10.4px 'Liberation Sans', sans-serif;line-height:20px;white-space:nowrap;color:#3535c9;-webkit-text-stroke:0.15px #3535c9;left:555.7px;transform:translateX(-50%)">end</div>
<div style="position:absolute;top:94px;font:normal normal 10.4px 'Liberation Sans', sans-serif;line-height:20px;white-space:nowrap;color:#3535c9;-webkit-text-stroke:0.15px #3535c9;left:641.2px;transform:translateX(-50%)">Corresponding</div>
<div style="position:absolute;top:107px;font:normal normal 10.4px 'Liberation Sans', sans-serif;line-height:20px;white-space:nowrap;color:#3535c9;-webkit-text-stroke:0.15px #3535c9;left:641.2px;transform:translateX(-50%)">period</div>
<div style="position:absolute;top:119px;font:normal normal 10.4px 'Liberation Sans', sans-serif;line-height:20px;white-space:nowrap;color:#3535c9;-webkit-text-stroke:0.15px #3535c9;left:641.2px;transform:translateX(-50%)">fraction</div>
<div style="position:absolute;top:107px;font:normal normal 10.4px 'Liberation Sans', sans-serif;line-height:20px;white-space:nowrap;color:#3535c9;-webkit-text-stroke:0.15px #3535c9;left:726.9px;transform:translateX(-50%)">Corresponding</div>
<div style="position:absolute;top:119px;font:normal normal 10.4px 'Liberation Sans', sans-serif;line-height:20px;white-space:nowrap;color:#3535c9;-webkit-text-stroke:0.15px #3535c9;left:726.9px;transform:translateX(-50%)">profit/loss</div>
<div style="position:absolute;top:94px;font:normal normal 10.4px 'Liberation Sans', sans-serif;line-height:20px;white-space:nowrap;color:#3535c9;-webkit-text-stroke:0.15px #3535c9;left:827.3px;transform:translateX(-50%)">Less prior</div>
<div style="position:absolute;top:107px;font:normal normal 10.4px 'Liberation Sans', sans-serif;line-height:20px;white-space:nowrap;color:#3535c9;-webkit-text-stroke:0.15px #3535c9;left:827.3px;transform:translateX(-50%)">corresponding</div>
<div style="position:absolute;top:119px;font:normal normal 10.4px 'Liberation Sans', sans-serif;line-height:20px;white-space:nowrap;color:#3535c9;-webkit-text-stroke:0.15px #3535c9;left:827.3px;transform:translateX(-50%)">surrenders/ claims</div>
<div style="position:absolute;top:94px;font:normal normal 10.4px 'Liberation Sans', sans-serif;line-height:20px;white-space:nowrap;color:#3535c9;-webkit-text-stroke:0.15px #3535c9;left:927.4px;transform:translateX(-50%)">Maximum</div>
<div style="position:absolute;top:107px;font:normal normal 10.4px 'Liberation Sans', sans-serif;line-height:20px;white-space:nowrap;color:#3535c9;-webkit-text-stroke:0.15px #3535c9;left:927.4px;transform:translateX(-50%)">corresponding</div>
<div style="position:absolute;top:119px;font:normal normal 10.4px 'Liberation Sans', sans-serif;line-height:20px;white-space:nowrap;color:#3535c9;-webkit-text-stroke:0.15px #3535c9;left:927.4px;transform:translateX(-50%)">claim</div>
<div style="position:absolute;top:94px;font:italic normal 10.4px 'Liberation Sans', sans-serif;line-height:20px;white-space:nowrap;color:#2e2e2e;-webkit-text-stroke:0.15px #2e2e2e;left:1060.2px;transform:translateX(-50%)">Group</div>
<div style="position:absolute;top:107px;font:italic normal 10.4px 'Liberation Sans', sans-serif;line-height:20px;white-space:nowrap;color:#2e2e2e;-webkit-text-stroke:0.15px #2e2e2e;left:1060.2px;transform:translateX(-50%)">relief</div>
<div style="position:absolute;top:119px;font:italic normal 10.4px 'Liberation Sans', sans-serif;line-height:20px;white-space:nowrap;color:#2e2e2e;-webkit-text-stroke:0.15px #2e2e2e;left:1060.2px;transform:translateX(-50%)">order</div>
<div style="position:absolute;top:283px;font:normal normal 10.4px 'Liberation Sans', sans-serif;line-height:20px;white-space:nowrap;color:#3535c9;-webkit-text-stroke:0.15px #3535c9;left:71.3px;transform:translateX(-50%)">Name</div>
<div style="position:absolute;top:283px;font:normal normal 10.4px 'Liberation Sans', sans-serif;line-height:20px;white-space:nowrap;color:#3535c9;-webkit-text-stroke:0.15px #3535c9;left:179.9px;transform:translateX(-50%)">Surrender</div>
<div style="position:absolute;top:283px;font:normal normal 10.4px 'Liberation Sans', sans-serif;line-height:20px;white-space:nowrap;color:#3535c9;-webkit-text-stroke:0.15px #3535c9;left:251.0px;transform:translateX(-50%)">Start</div>
<div style="position:absolute;top:283px;font:normal normal 10.4px 'Liberation Sans', sans-serif;line-height:20px;white-space:nowrap;color:#3535c9;-webkit-text-stroke:0.15px #3535c9;left:319.2px;transform:translateX(-50%)">End</div>
<div style="position:absolute;top:271px;font:normal normal 10.4px 'Liberation Sans', sans-serif;line-height:20px;white-space:nowrap;color:#8e8e8e;-webkit-text-stroke:0.15px #8e8e8e;left:371.4px;transform:translateX(-50%)">Join</div>
<div style="position:absolute;top:283px;font:normal normal 10.4px 'Liberation Sans', sans-serif;line-height:20px;white-space:nowrap;color:#8e8e8e;-webkit-text-stroke:0.15px #8e8e8e;left:371.4px;transform:translateX(-50%)">date</div>
<div style="position:absolute;top:271px;font:normal normal 10.4px 'Liberation Sans', sans-serif;line-height:20px;white-space:nowrap;color:#8e8e8e;-webkit-text-stroke:0.15px #8e8e8e;left:408.4px;transform:translateX(-50%)">Left</div>
<div style="position:absolute;top:283px;font:normal normal 10.4px 'Liberation Sans', sans-serif;line-height:20px;white-space:nowrap;color:#8e8e8e;-webkit-text-stroke:0.15px #8e8e8e;left:408.4px;transform:translateX(-50%)">date</div>
<div style="position:absolute;top:271px;font:normal normal 10.4px 'Liberation Sans', sans-serif;line-height:20px;white-space:nowrap;color:#3535c9;-webkit-text-stroke:0.15px #3535c9;left:469.8px;transform:translateX(-50%)">Corresponding</div>
<div style="position:absolute;top:283px;font:normal normal 10.4px 'Liberation Sans', sans-serif;line-height:20px;white-space:nowrap;color:#3535c9;-webkit-text-stroke:0.15px #3535c9;left:469.8px;transform:translateX(-50%)">start</div>
<div style="position:absolute;top:271px;font:normal normal 10.4px 'Liberation Sans', sans-serif;line-height:20px;white-space:nowrap;color:#3535c9;-webkit-text-stroke:0.15px #3535c9;left:555.7px;transform:translateX(-50%)">Corresponding</div>
<div style="position:absolute;top:283px;font:normal normal 10.4px 'Liberation Sans', sans-serif;line-height:20px;white-space:nowrap;color:#3535c9;-webkit-text-stroke:0.15px #3535c9;left:555.7px;transform:translateX(-50%)">end</div>
<div style="position:absolute;top:258px;font:normal normal 10.4px 'Liberation Sans', sans-serif;line-height:20px;white-space:nowrap;color:#3535c9;-webkit-text-stroke:0.15px #3535c9;left:641.2px;transform:translateX(-50%)">Corresponding</div>
<div style="position:absolute;top:271px;font:normal normal 10.4px 'Liberation Sans', sans-serif;line-height:20px;white-space:nowrap;color:#3535c9;-webkit-text-stroke:0.15px #3535c9;left:641.2px;transform:translateX(-50%)">period</div>
<div style="position:absolute;top:283px;font:normal normal 10.4px 'Liberation Sans', sans-serif;line-height:20px;white-space:nowrap;color:#3535c9;-webkit-text-stroke:0.15px #3535c9;left:641.2px;transform:translateX(-50%)">fraction</div>
<div style="position:absolute;top:283px;font:normal normal 10.4px 'Liberation Sans', sans-serif;line-height:20px;white-space:nowrap;color:#3535c9;-webkit-text-stroke:0.15px #3535c9;left:726.9px;transform:translateX(-50%)">Common start</div>
<div style="position:absolute;top:283px;font:normal normal 10.4px 'Liberation Sans', sans-serif;line-height:20px;white-space:nowrap;color:#3535c9;-webkit-text-stroke:0.15px #3535c9;left:827.3px;transform:translateX(-50%)">Common end</div>
<div style="position:absolute;top:258px;font:normal normal 10.4px 'Liberation Sans', sans-serif;line-height:20px;white-space:nowrap;color:#3535c9;-webkit-text-stroke:0.15px #3535c9;left:927.4px;transform:translateX(-50%)">Common</div>
<div style="position:absolute;top:271px;font:normal normal 10.4px 'Liberation Sans', sans-serif;line-height:20px;white-space:nowrap;color:#3535c9;-webkit-text-stroke:0.15px #3535c9;left:927.4px;transform:translateX(-50%)">period</div>
<div style="position:absolute;top:283px;font:normal normal 10.4px 'Liberation Sans', sans-serif;line-height:20px;white-space:nowrap;color:#3535c9;-webkit-text-stroke:0.15px #3535c9;left:927.4px;transform:translateX(-50%)">fraction</div>
<div style="position:absolute;top:271px;font:normal normal 10.4px 'Liberation Sans', sans-serif;line-height:20px;white-space:nowrap;color:#3535c9;-webkit-text-stroke:0.15px #3535c9;left:1006.2px;transform:translateX(-50%)">Common</div>
<div style="position:absolute;top:283px;font:normal normal 10.4px 'Liberation Sans', sans-serif;line-height:20px;white-space:nowrap;color:#3535c9;-webkit-text-stroke:0.15px #3535c9;left:1006.2px;transform:translateX(-50%)">surrender</div>
<div style="position:absolute;top:258px;font:italic normal 10.4px 'Liberation Sans', sans-serif;line-height:20px;white-space:nowrap;color:#2e2e2e;-webkit-text-stroke:0.15px #2e2e2e;left:1060.2px;transform:translateX(-50%)">Group</div>
<div style="position:absolute;top:271px;font:italic normal 10.4px 'Liberation Sans', sans-serif;line-height:20px;white-space:nowrap;color:#2e2e2e;-webkit-text-stroke:0.15px #2e2e2e;left:1060.2px;transform:translateX(-50%)">relief</div>
<div style="position:absolute;top:283px;font:italic normal 10.4px 'Liberation Sans', sans-serif;line-height:20px;white-space:nowrap;color:#2e2e2e;-webkit-text-stroke:0.15px #2e2e2e;left:1060.2px;transform:translateX(-50%)">order</div>
<div style="position:absolute;top:410px;font:normal normal 10.4px 'Liberation Sans', sans-serif;line-height:20px;white-space:nowrap;color:#3535c9;-webkit-text-stroke:0.15px #3535c9;left:71.3px;transform:translateX(-50%)">Name</div>
<div style="position:absolute;top:410px;font:normal normal 10.4px 'Liberation Sans', sans-serif;line-height:20px;white-space:nowrap;color:#3535c9;-webkit-text-stroke:0.15px #3535c9;left:179.9px;transform:translateX(-50%)">Claim</div>
<div style="position:absolute;top:410px;font:normal normal 10.4px 'Liberation Sans', sans-serif;line-height:20px;white-space:nowrap;color:#3535c9;-webkit-text-stroke:0.15px #3535c9;left:251.0px;transform:translateX(-50%)">Start</div>
<div style="position:absolute;top:410px;font:normal normal 10.4px 'Liberation Sans', sans-serif;line-height:20px;white-space:nowrap;color:#3535c9;-webkit-text-stroke:0.15px #3535c9;left:319.2px;transform:translateX(-50%)">End</div>
<div style="position:absolute;top:397px;font:normal normal 10.4px 'Liberation Sans', sans-serif;line-height:20px;white-space:nowrap;color:#8e8e8e;-webkit-text-stroke:0.15px #8e8e8e;left:371.4px;transform:translateX(-50%)">Join</div>
<div style="position:absolute;top:410px;font:normal normal 10.4px 'Liberation Sans', sans-serif;line-height:20px;white-space:nowrap;color:#8e8e8e;-webkit-text-stroke:0.15px #8e8e8e;left:371.4px;transform:translateX(-50%)">date</div>
<div style="position:absolute;top:397px;font:normal normal 10.4px 'Liberation Sans', sans-serif;line-height:20px;white-space:nowrap;color:#8e8e8e;-webkit-text-stroke:0.15px #8e8e8e;left:408.4px;transform:translateX(-50%)">Left</div>
<div style="position:absolute;top:410px;font:normal normal 10.4px 'Liberation Sans', sans-serif;line-height:20px;white-space:nowrap;color:#8e8e8e;-webkit-text-stroke:0.15px #8e8e8e;left:408.4px;transform:translateX(-50%)">date</div>
<div style="position:absolute;top:397px;font:normal normal 10.4px 'Liberation Sans', sans-serif;line-height:20px;white-space:nowrap;color:#3535c9;-webkit-text-stroke:0.15px #3535c9;left:469.8px;transform:translateX(-50%)">Corresponding</div>
<div style="position:absolute;top:410px;font:normal normal 10.4px 'Liberation Sans', sans-serif;line-height:20px;white-space:nowrap;color:#3535c9;-webkit-text-stroke:0.15px #3535c9;left:469.8px;transform:translateX(-50%)">start</div>
<div style="position:absolute;top:397px;font:normal normal 10.4px 'Liberation Sans', sans-serif;line-height:20px;white-space:nowrap;color:#3535c9;-webkit-text-stroke:0.15px #3535c9;left:555.7px;transform:translateX(-50%)">Corresponding</div>
<div style="position:absolute;top:410px;font:normal normal 10.4px 'Liberation Sans', sans-serif;line-height:20px;white-space:nowrap;color:#3535c9;-webkit-text-stroke:0.15px #3535c9;left:555.7px;transform:translateX(-50%)">end</div>
<div style="position:absolute;top:385px;font:normal normal 10.4px 'Liberation Sans', sans-serif;line-height:20px;white-space:nowrap;color:#3535c9;-webkit-text-stroke:0.15px #3535c9;left:641.2px;transform:translateX(-50%)">Corresponding</div>
<div style="position:absolute;top:397px;font:normal normal 10.4px 'Liberation Sans', sans-serif;line-height:20px;white-space:nowrap;color:#3535c9;-webkit-text-stroke:0.15px #3535c9;left:641.2px;transform:translateX(-50%)">period</div>
<div style="position:absolute;top:410px;font:normal normal 10.4px 'Liberation Sans', sans-serif;line-height:20px;white-space:nowrap;color:#3535c9;-webkit-text-stroke:0.15px #3535c9;left:641.2px;transform:translateX(-50%)">fraction</div>
<div style="position:absolute;top:410px;font:normal normal 10.4px 'Liberation Sans', sans-serif;line-height:20px;white-space:nowrap;color:#3535c9;-webkit-text-stroke:0.15px #3535c9;left:726.9px;transform:translateX(-50%)">Common start</div>
<div style="position:absolute;top:410px;font:normal normal 10.4px 'Liberation Sans', sans-serif;line-height:20px;white-space:nowrap;color:#3535c9;-webkit-text-stroke:0.15px #3535c9;left:827.3px;transform:translateX(-50%)">Common end</div>
<div style="position:absolute;top:385px;font:normal normal 10.4px 'Liberation Sans', sans-serif;line-height:20px;white-space:nowrap;color:#3535c9;-webkit-text-stroke:0.15px #3535c9;left:927.4px;transform:translateX(-50%)">Common</div>
<div style="position:absolute;top:397px;font:normal normal 10.4px 'Liberation Sans', sans-serif;line-height:20px;white-space:nowrap;color:#3535c9;-webkit-text-stroke:0.15px #3535c9;left:927.4px;transform:translateX(-50%)">period</div>
<div style="position:absolute;top:410px;font:normal normal 10.4px 'Liberation Sans', sans-serif;line-height:20px;white-space:nowrap;color:#3535c9;-webkit-text-stroke:0.15px #3535c9;left:927.4px;transform:translateX(-50%)">fraction</div>
<div style="position:absolute;top:397px;font:normal normal 10.4px 'Liberation Sans', sans-serif;line-height:20px;white-space:nowrap;color:#3535c9;-webkit-text-stroke:0.15px #3535c9;left:1006.2px;transform:translateX(-50%)">Common</div>
<div style="position:absolute;top:410px;font:normal normal 10.4px 'Liberation Sans', sans-serif;line-height:20px;white-space:nowrap;color:#3535c9;-webkit-text-stroke:0.15px #3535c9;left:1006.2px;transform:translateX(-50%)">claim</div>
<div style="position:absolute;top:385px;font:italic normal 10.4px 'Liberation Sans', sans-serif;line-height:20px;white-space:nowrap;color:#2e2e2e;-webkit-text-stroke:0.15px #2e2e2e;left:1060.2px;transform:translateX(-50%)">Group</div>
<div style="position:absolute;top:397px;font:italic normal 10.4px 'Liberation Sans', sans-serif;line-height:20px;white-space:nowrap;color:#2e2e2e;-webkit-text-stroke:0.15px #2e2e2e;left:1060.2px;transform:translateX(-50%)">relief</div>
<div style="position:absolute;top:410px;font:italic normal 10.4px 'Liberation Sans', sans-serif;line-height:20px;white-space:nowrap;color:#2e2e2e;-webkit-text-stroke:0.15px #2e2e2e;left:1060.2px;transform:translateX(-50%)">order</div>
<div style="position:absolute;top:145px;font:normal bold 10px 'Liberation Sans', sans-serif;line-height:20px;white-space:nowrap;color:#2c2cc6;-webkit-text-stroke:0.3px #2c2cc6;left:22.8px">Loss maker:</div>
<div style="position:absolute;top:158px;font:normal normal 10.4px 'Liberation Sans', sans-serif;line-height:20px;white-space:nowrap;color:#3434c8;-webkit-text-stroke:0.15px #3434c8;left:22.8px">Dumbarton</div>
<div style="position:absolute;top:156px;font:normal normal 8.4px 'Liberation Sans', sans-serif;line-height:20px;white-space:nowrap;color:#111111;-webkit-text-stroke:0.1px #111111;left:123.5px">A2,</div>
<div style="position:absolute;top:156px;font:normal normal 8.4px 'Liberation Sans', sans-serif;line-height:20px;white-space:nowrap;color:#111111;-webkit-text-stroke:0.1px #111111;left:140.3px">B</div>
<div style="position:absolute;top:158px;font:normal normal 10.4px 'Liberation Sans', sans-serif;line-height:20px;white-space:nowrap;color:#3434c8;-webkit-text-stroke:0.15px #3434c8;left:147.8px">£</div>
<div style="position:absolute;top:158px;font:normal normal 10.4px 'Liberation Sans', sans-serif;line-height:20px;white-space:nowrap;color:#3434c8;-webkit-text-stroke:0.15px #3434c8;right:899.9px">1,500,000</div>
<div style="position:absolute;top:158px;font:normal normal 10.4px 'Liberation Sans', sans-serif;line-height:20px;white-space:nowrap;color:#3434c8;-webkit-text-stroke:0.15px #3434c8;right:832.5px">01/01/2009</div>
<div style="position:absolute;top:158px;font:normal normal 10.4px 'Liberation Sans', sans-serif;line-height:20px;white-space:nowrap;color:#3434c8;-webkit-text-stroke:0.15px #3434c8;right:764.5px">31/12/2009</div>
<div style="position:absolute;top:158px;font:normal normal 10.4px 'Liberation Sans', sans-serif;line-height:20px;white-space:nowrap;color:#3434c8;-webkit-text-stroke:0.15px #3434c8;right:604.9px">01/01/2009</div>
<div style="position:absolute;top:158px;font:normal normal 10.4px 'Liberation Sans', sans-serif;line-height:20px;white-space:nowrap;color:#3434c8;-webkit-text-stroke:0.15px #3434c8;right:519.2px">31/12/2009</div>
<div style="position:absolute;top:158px;font:normal normal 10.4px 'Liberation Sans', sans-serif;line-height:20px;white-space:nowrap;color:#3434c8;-webkit-text-stroke:0.15px #3434c8;right:429.8px">365/365</div>
<div style="position:absolute;top:158px;font:normal normal 10.4px 'Liberation Sans', sans-serif;line-height:20px;white-space:nowrap;color:#3434c8;-webkit-text-stroke:0.15px #3434c8;left:687.0px">£</div>
<div style="position:absolute;top:158px;font:normal normal 10.4px 'Liberation Sans', sans-serif;line-height:20px;white-space:nowrap;color:#3434c8;-webkit-text-stroke:0.15px #3434c8;right:346.1px">1,500,000</div>
<svg style="position:absolute;left:772.3px;top:161.5px" width="5" height="8" viewBox="0 0 5 8"><path d="M2.2 0 V5.8" stroke="#1a1a1a" stroke-width="1.1"/><path d="M0.3 4 L2.2 6.7 L4.1 4" stroke="#1a1a1a" stroke-width="1" fill="none"/></svg>
<div style="position:absolute;top:158px;font:normal normal 10.4px 'Liberation Sans', sans-serif;line-height:20px;white-space:nowrap;color:#3434c8;-webkit-text-stroke:0.15px #3434c8;left:778.8px">£</div>
<div style="position:absolute;top:158px;font:normal normal 10.4px 'Liberation Sans', sans-serif;line-height:20px;white-space:nowrap;color:#3434c8;-webkit-text-stroke:0.15px #3434c8;right:234.5px">(707,671)</div>
<svg style="position:absolute;left:882.5px;top:162px" width="5" height="8" viewBox="0 0 5 8"><path d="M2.2 0 V5.8" stroke="#1a1a1a" stroke-width="1.1"/><path d="M0.3 4 L2.2 6.7 L4.1 4" stroke="#1a1a1a" stroke-width="1" fill="none"/></svg>
<div style="position:absolute;top:158px;font:normal normal 10.4px 'Liberation Sans', sans-serif;line-height:20px;white-space:nowrap;color:#3434c8;-webkit-text-stroke:0.15px #3434c8;left:888.8px">£</div>
<div style="position:absolute;top:158px;font:normal normal 10.4px 'Liberation Sans', sans-serif;line-height:20px;white-space:nowrap;color:#3434c8;-webkit-text-stroke:0.15px #3434c8;right:147.0px">792,329</div>
<div style="position:absolute;top:158px;font:italic normal 10.4px 'Liberation Sans', sans-serif;line-height:20px;white-space:nowrap;color:#2e2e2e;-webkit-text-stroke:0.15px #2e2e2e;left:1060.0px;transform:translateX(-50%)">2</div>
<div style="position:absolute;top:170px;font:normal bold 10px 'Liberation Sans', sans-serif;line-height:20px;white-space:nowrap;color:#2c2cc6;-webkit-text-stroke:0.3px #2c2cc6;left:22.8px">Profit maker:</div>
<div style="position:absolute;top:183px;font:normal normal 10.4px 'Liberation Sans', sans-serif;line-height:20px;white-space:nowrap;color:#3434c8;-webkit-text-stroke:0.15px #3434c8;left:22.8px">Dundee</div>
<div style="position:absolute;top:181px;font:normal normal 8.4px 'Liberation Sans', sans-serif;line-height:20px;white-space:nowrap;color:#111111;-webkit-text-stroke:0.1px #111111;left:140.3px">B</div>
<div style="position:absolute;top:183px;font:normal normal 10.4px 'Liberation Sans', sans-serif;line-height:20px;white-space:nowrap;color:#3434c8;-webkit-text-stroke:0.15px #3434c8;right:899.9px">2,807,500</div>
<div style="position:absolute;top:183px;font:normal normal 10.4px 'Liberation Sans', sans-serif;line-height:20px;white-space:nowrap;color:#3434c8;-webkit-text-stroke:0.15px #3434c8;right:832.5px">01/01/2009</div>
<div style="position:absolute;top:183px;font:normal normal 10.4px 'Liberation Sans', sans-serif;line-height:20px;white-space:nowrap;color:#3434c8;-webkit-text-stroke:0.15px #3434c8;right:764.5px">31/12/2009</div>
<div style="position:absolute;top:183px;font:normal normal 10.4px 'Liberation Sans', sans-serif;line-height:20px;white-space:nowrap;color:#3434c8;-webkit-text-stroke:0.15px #3434c8;right:604.9px">01/01/2009</div>
<div style="position:absolute;top:183px;font:normal normal 10.4px 'Liberation Sans', sans-serif;line-height:20px;white-space:nowrap;color:#3434c8;-webkit-text-stroke:0.15px #3434c8;right:519.2px">31/12/2009</div>
<div style="position:absolute;top:183px;font:normal normal 10.4px 'Liberation Sans', sans-serif;line-height:20px;white-space:nowrap;color:#3434c8;-webkit-text-stroke:0.15px #3434c8;right:429.8px">365/365</div>
<div style="position:absolute;top:183px;font:normal normal 10.4px 'Liberation Sans', sans-serif;line-height:20px;white-space:nowrap;color:#3434c8;-webkit-text-stroke:0.15px #3434c8;right:346.1px">2,807,500</div>
<svg style="position:absolute;left:772.3px;top:186.3px" width="5" height="8" viewBox="0 0 5 8"><path d="M2.2 0 V5.8" stroke="#1a1a1a" stroke-width="1.1"/><path d="M0.3 4 L2.2 6.7 L4.1 4" stroke="#1a1a1a" stroke-width="1" fill="none"/></svg>
<div style="position:absolute;top:183px;font:normal normal 10.4px 'Liberation Sans', sans-serif;line-height:20px;white-space:nowrap;color:#3434c8;-webkit-text-stroke:0.15px #3434c8;right:234.5px">(97,945)</div>
<div style="position:absolute;top:183px;font:normal normal 10.4px 'Liberation Sans', sans-serif;line-height:20px;white-space:nowrap;color:#3434c8;-webkit-text-stroke:0.15px #3434c8;right:147.0px">2,709,555</div>
<div style="position:absolute;top:183px;font:italic normal 10.4px 'Liberation Sans', sans-serif;line-height:20px;white-space:nowrap;color:#2e2e2e;-webkit-text-stroke:0.15px #2e2e2e;left:1060.0px;transform:translateX(-50%)">5</div>
<div style="position:absolute;top:208px;font:normal normal 10.4px 'Liberation Sans', sans-serif;line-height:20px;white-space:nowrap;color:#3434c8;-webkit-text-stroke:0.15px #3434c8;left:22.8px">Maximum claim</div>
<svg style="position:absolute;left:882.5px;top:211.5px" width="5" height="8" viewBox="0 0 5 8"><path d="M2.2 7 V1.2" stroke="#1a1a1a" stroke-width="1.1"/><path d="M0.3 3 L2.2 0.3 L4.1 3" stroke="#1a1a1a" stroke-width="1" fill="none"/></svg>
<div style="position:absolute;top:208px;font:normal normal 10.4px 'Liberation Sans', sans-serif;line-height:20px;white-space:nowrap;color:#3434c8;-webkit-text-stroke:0.15px #3434c8;left:888.8px">£</div>
<div style="position:absolute;top:208px;font:normal normal 10.4px 'Liberation Sans', sans-serif;line-height:20px;white-space:nowrap;color:#3434c8;-webkit-text-stroke:0.15px #3434c8;right:147.2px">792,329</div>
<div style="position:absolute;top:220px;font:normal normal 10.4px 'Liberation Sans', sans-serif;line-height:20px;white-space:nowrap;color:#3434c8;-webkit-text-stroke:0.15px #3434c8;left:22.8px">Actual claim</div>
<div style="position:absolute;top:219px;font:normal normal 8.4px 'Liberation Sans', sans-serif;line-height:20px;white-space:nowrap;color:#111111;-webkit-text-stroke:0.1px #111111;left:881.1px">B</div>
<div style="position:absolute;top:220px;font:normal normal 10.4px 'Liberation Sans', sans-serif;line-height:20px;white-space:nowrap;color:#3434c8;-webkit-text-stroke:0.15px #3434c8;right:147.2px">792,329</div>
<div style="position:absolute;top:246px;font:normal bold 10px 'Liberation Sans', sans-serif;line-height:20px;white-space:nowrap;color:#2c2cc6;-webkit-text-stroke:0.3px #2c2cc6;left:22.8px">Prior Surrenders:</div>
<div style="position:absolute;top:309px;font:normal normal 10.4px 'Liberation Sans', sans-serif;line-height:20px;white-space:nowrap;color:#3434c8;-webkit-text-stroke:0.15px #3434c8;left:22.8px">Stirling</div>
<div style="position:absolute;top:307px;font:normal normal 8.4px 'Liberation Sans', sans-serif;line-height:20px;white-space:nowrap;color:#111111;-webkit-text-stroke:0.1px #111111;left:140.3px">B</div>
<div style="position:absolute;top:309px;font:normal normal 10.4px 'Liberation Sans', sans-serif;line-height:20px;white-space:nowrap;color:#3434c8;-webkit-text-stroke:0.15px #3434c8;left:147.8px">£</div>
<div style="position:absolute;top:309px;font:normal normal 10.4px 'Liberation Sans', sans-serif;line-height:20px;white-space:nowrap;color:#3434c8;-webkit-text-stroke:0.15px #3434c8;right:901.0px">707,671</div>
<div style="position:absolute;top:309px;font:normal normal 10.4px 'Liberation Sans', sans-serif;line-height:20px;white-space:nowrap;color:#3434c8;-webkit-text-stroke:0.15px #3434c8;right:832.5px">01/01/2009</div>
<div style="position:absolute;top:309px;font:normal normal 10.4px 'Liberation Sans', sans-serif;line-height:20px;white-space:nowrap;color:#3434c8;-webkit-text-stroke:0.15px #3434c8;right:764.5px">31/12/2009</div>
<div style="position:absolute;top:309px;font:normal normal 10.4px 'Liberation Sans', sans-serif;line-height:20px;white-space:nowrap;color:#3434c8;-webkit-text-stroke:0.15px #3434c8;right:604.9px">01/01/2009</div>
<div style="position:absolute;top:309px;font:normal normal 10.4px 'Liberation Sans', sans-serif;line-height:20px;white-space:nowrap;color:#3434c8;-webkit-text-stroke:0.15px #3434c8;right:519.2px">31/12/2009</div>
<div style="position:absolute;top:309px;font:normal normal 10.4px 'Liberation Sans', sans-serif;line-height:20px;white-space:nowrap;color:#3434c8;-webkit-text-stroke:0.15px #3434c8;right:429.8px">365/365</div>
<div style="position:absolute;top:309px;font:normal normal 10.4px 'Liberation Sans', sans-serif;line-height:20px;white-space:nowrap;color:#3434c8;-webkit-text-stroke:0.15px #3434c8;right:347.9px">01/01/2009</div>
<div style="position:absolute;top:309px;font:normal normal 10.4px 'Liberation Sans', sans-serif;line-height:20px;white-space:nowrap;color:#3434c8;-webkit-text-stroke:0.15px #3434c8;right:238.8px">31/12/2009</div>
<div style="position:absolute;top:309px;font:normal normal 10.4px 'Liberation Sans', sans-serif;line-height:20px;white-space:nowrap;color:#3434c8;-webkit-text-stroke:0.15px #3434c8;right:145.0px">365/365</div>
<div style="position:absolute;top:309px;font:normal normal 10.4px 'Liberation Sans', sans-serif;line-height:20px;white-space:nowrap;color:#3434c8;-webkit-text-stroke:0.15px #3434c8;left:977.9px">£</div>
<div style="position:absolute;top:309px;font:normal normal 10.4px 'Liberation Sans', sans-serif;line-height:20px;white-space:nowrap;color:#3434c8;-webkit-text-stroke:0.15px #3434c8;right:79.5px">707,671</div>
<div style="position:absolute;top:309px;font:italic normal 10.4px 'Liberation Sans', sans-serif;line-height:20px;white-space:nowrap;color:#2e2e2e;-webkit-text-stroke:0.15px #2e2e2e;left:1060.0px;transform:translateX(-50%)">4</div>
<div style="position:absolute;top:334px;font:normal normal 10.4px 'Liberation Sans', sans-serif;line-height:20px;white-space:nowrap;color:#3434c8;-webkit-text-stroke:0.15px #3434c8;right:901.0px">707,671</div>
<svg style="position:absolute;left:972px;top:338px" width="5" height="8" viewBox="0 0 5 8"><path d="M2.2 7 V1.2" stroke="#1a1a1a" stroke-width="1.1"/><path d="M0.3 3 L2.2 0.3 L4.1 3" stroke="#1a1a1a" stroke-width="1" fill="none"/></svg>
<div style="position:absolute;top:334px;font:normal normal 10.4px 'Liberation Sans', sans-serif;line-height:20px;white-space:nowrap;color:#3434c8;-webkit-text-stroke:0.15px #3434c8;right:79.5px">707,671</div>
<div style="position:absolute;top:372px;font:normal bold 10px 'Liberation Sans', sans-serif;line-height:20px;white-space:nowrap;color:#2c2cc6;-webkit-text-stroke:0.3px #2c2cc6;left:22.8px">Prior Claims:</div>
<div style="position:absolute;top:434px;font:normal normal 10.4px 'Liberation Sans', sans-serif;line-height:20px;white-space:nowrap;color:#3434c8;-webkit-text-stroke:0.15px #3434c8;left:22.8px">Ballymena</div>
<div style="position:absolute;top:433px;font:normal normal 8.4px 'Liberation Sans', sans-serif;line-height:20px;white-space:nowrap;color:#111111;-webkit-text-stroke:0.1px #111111;left:140.3px">B</div>
<div style="position:absolute;top:434px;font:normal normal 10.4px 'Liberation Sans', sans-serif;line-height:20px;white-space:nowrap;color:#3434c8;-webkit-text-stroke:0.15px #3434c8;left:147.9px">£</div>
<div style="position:absolute;top:434px;font:normal normal 10.4px 'Liberation Sans', sans-serif;line-height:20px;white-space:nowrap;color:#3434c8;-webkit-text-stroke:0.15px #3434c8;right:899.7px">97,945</div>
<div style="position:absolute;top:434px;font:normal normal 10.4px 'Liberation Sans', sans-serif;line-height:20px;white-space:nowrap;color:#3434c8;-webkit-text-stroke:0.15px #3434c8;right:832.4px">01/04/2009</div>
<div style="position:absolute;top:434px;font:normal normal 10.4px 'Liberation Sans', sans-serif;line-height:20px;white-space:nowrap;color:#3434c8;-webkit-text-stroke:0.15px #3434c8;right:764.6px">31/03/2010</div>
<div style="position:absolute;top:434px;font:normal normal 10.4px 'Liberation Sans', sans-serif;line-height:20px;white-space:nowrap;color:#3434c8;-webkit-text-stroke:0.15px #3434c8;right:604.9px">01/04/2009</div>
<div style="position:absolute;top:434px;font:normal normal 10.4px 'Liberation Sans', sans-serif;line-height:20px;white-space:nowrap;color:#3434c8;-webkit-text-stroke:0.15px #3434c8;right:519.2px">31/12/2009</div>
<div style="position:absolute;top:434px;font:normal normal 10.4px 'Liberation Sans', sans-serif;line-height:20px;white-space:nowrap;color:#3434c8;-webkit-text-stroke:0.15px #3434c8;right:347.9px">01/04/2009</div>
<div style="position:absolute;top:434px;font:normal normal 10.4px 'Liberation Sans', sans-serif;line-height:20px;white-space:nowrap;color:#3434c8;-webkit-text-stroke:0.15px #3434c8;right:238.8px">31/12/2009</div>
<div style="position:absolute;top:434px;font:normal normal 10.4px 'Liberation Sans', sans-serif;line-height:20px;white-space:nowrap;color:#3434c8;-webkit-text-stroke:0.15px #3434c8;right:145.0px">275/275</div>
<div style="position:absolute;top:434px;font:normal normal 10.4px 'Liberation Sans', sans-serif;line-height:20px;white-space:nowrap;color:#3434c8;-webkit-text-stroke:0.15px #3434c8;left:977.9px">£</div>
<div style="position:absolute;top:434px;font:normal normal 10.4px 'Liberation Sans', sans-serif;line-height:20px;white-space:nowrap;color:#3434c8;-webkit-text-stroke:0.15px #3434c8;right:79.1px">97,945</div>
<div style="position:absolute;top:434px;font:italic normal 10.4px 'Liberation Sans', sans-serif;line-height:20px;white-space:nowrap;color:#2e2e2e;-webkit-text-stroke:0.15px #2e2e2e;left:1060.0px;transform:translateX(-50%)">1</div>
<div style="position:absolute;top:459px;font:normal normal 10.4px 'Liberation Sans', sans-serif;line-height:20px;white-space:nowrap;color:#3434c8;-webkit-text-stroke:0.15px #3434c8;left:147.9px">£</div>
<div style="position:absolute;top:459px;font:normal normal 10.4px 'Liberation Sans', sans-serif;line-height:20px;white-space:nowrap;color:#3434c8;-webkit-text-stroke:0.15px #3434c8;right:899.7px">97,945</div>
<svg style="position:absolute;left:971.8px;top:463px" width="5" height="8" viewBox="0 0 5 8"><path d="M2.2 7 V1.2" stroke="#1a1a1a" stroke-width="1.1"/><path d="M0.3 3 L2.2 0.3 L4.1 3" stroke="#1a1a1a" stroke-width="1" fill="none"/></svg>
<div style="position:absolute;top:459px;font:normal normal 10.4px 'Liberation Sans', sans-serif;line-height:20px;white-space:nowrap;color:#3434c8;-webkit-text-stroke:0.15px #3434c8;left:977.9px">£</div>
<div style="position:absolute;top:459px;font:normal normal 10.4px 'Liberation Sans', sans-serif;line-height:20px;white-space:nowrap;color:#3434c8;-webkit-text-stroke:0.15px #3434c8;right:79.1px">97,945</div>
<svg style="position:absolute;left:0;top:0" width="1111" height="520" viewBox="0 0 1111 520"><rect x="24" y="138.05" width="95.60" height="1.75" fill="#5f5fe3"/><rect x="146" y="138.05" width="68.00" height="1.75" fill="#5f5fe3"/><rect x="218.8" y="138.05" width="64.20" height="1.75" fill="#5f5fe3"/><rect x="286.2" y="138.05" width="64.60" height="1.75" fill="#5f5fe3"/><rect x="354.6" y="138.05" width="32.80" height="1.75" fill="#b0b0b0"/><rect x="391.5" y="138.05" width="33.00" height="1.75" fill="#b0b0b0"/><rect x="428.8" y="138.05" width="81.20" height="1.75" fill="#5f5fe3"/><rect x="514" y="138.05" width="82.00" height="1.75" fill="#5f5fe3"/><rect x="599.8" y="138.05" width="82.00" height="1.75" fill="#5f5fe3"/><rect x="685.5" y="138.05" width="82.10" height="1.75" fill="#5f5fe3"/><rect x="777" y="138.05" width="99.80" height="1.75" fill="#5f5fe3"/><rect x="887" y="138.05" width="79.60" height="1.75" fill="#5f5fe3"/><rect x="1039" y="138.05" width="41.00" height="1.75" fill="#5c5c5c"/><rect x="24" y="201.8" width="95.60" height="1.75" fill="#5f5fe3"/><rect x="146" y="201.8" width="68.00" height="1.75" fill="#5f5fe3"/><rect x="218.8" y="201.8" width="64.20" height="1.75" fill="#5f5fe3"/><rect x="286.2" y="201.8" width="64.60" height="1.75" fill="#5f5fe3"/><rect x="354.6" y="201.8" width="32.80" height="1.75" fill="#b0b0b0"/><rect x="391.5" y="201.8" width="33.00" height="1.75" fill="#b0b0b0"/><rect x="428.8" y="201.8" width="81.20" height="1.75" fill="#5f5fe3"/><rect x="514" y="201.8" width="82.00" height="1.75" fill="#5f5fe3"/><rect x="599.8" y="201.8" width="82.00" height="1.75" fill="#5f5fe3"/><rect x="685.5" y="201.8" width="82.10" height="1.75" fill="#5f5fe3"/><rect x="777" y="201.8" width="99.80" height="1.75" fill="#5f5fe3"/><rect x="887" y="201.8" width="79.60" height="1.75" fill="#5f5fe3"/><rect x="1039" y="201.8" width="41.00" height="1.75" fill="#5c5c5c"/><rect x="24" y="302.9" width="95.60" height="1.75" fill="#5f5fe3"/><rect x="146" y="302.9" width="68.00" height="1.75" fill="#5f5fe3"/><rect x="218.8" y="302.9" width="64.20" height="1.75" fill="#5f5fe3"/><rect x="286.2" y="302.9" width="64.60" height="1.75" fill="#5f5fe3"/><rect x="354.6" y="302.9" width="32.80" height="1.75" fill="#b0b0b0"/><rect x="391.5" y="302.9" width="33.00" height="1.75" fill="#b0b0b0"/><rect x="428.8" y="302.9" width="81.20" height="1.75" fill="#5f5fe3"/><rect x="514" y="302.9" width="82.00" height="1.75" fill="#5f5fe3"/><rect x="599.8" y="302.9" width="82.00" height="1.75" fill="#5f5fe3"/><rect x="685.5" y="302.9" width="82.10" height="1.75" fill="#5f5fe3"/><rect x="777" y="302.9" width="99.80" height="1.75" fill="#5f5fe3"/><rect x="887" y="302.9" width="79.60" height="1.75" fill="#5f5fe3"/><rect x="976.3" y="302.9" width="59.00" height="1.75" fill="#5f5fe3"/><rect x="1039" y="302.9" width="41.00" height="1.75" fill="#5c5c5c"/><rect x="24" y="327.9" width="95.60" height="1.75" fill="#5f5fe3"/><rect x="146" y="327.9" width="68.00" height="1.75" fill="#5f5fe3"/><rect x="218.8" y="327.9" width="64.20" height="1.75" fill="#5f5fe3"/><rect x="286.2" y="327.9" width="64.60" height="1.75" fill="#5f5fe3"/><rect x="354.6" y="327.9" width="32.80" height="1.75" fill="#b0b0b0"/><rect x="391.5" y="327.9" width="33.00" height="1.75" fill="#b0b0b0"/><rect x="428.8" y="327.9" width="81.20" height="1.75" fill="#5f5fe3"/><rect x="514" y="327.9" width="82.00" height="1.75" fill="#5f5fe3"/><rect x="599.8" y="327.9" width="82.00" height="1.75" fill="#5f5fe3"/><rect x="685.5" y="327.9" width="82.10" height="1.75" fill="#5f5fe3"/><rect x="777" y="327.9" width="99.80" height="1.75" fill="#5f5fe3"/><rect x="887" y="327.9" width="79.60" height="1.75" fill="#5f5fe3"/><rect x="976.3" y="327.9" width="59.00" height="1.75" fill="#5f5fe3"/><rect x="1039" y="327.9" width="41.00" height="1.75" fill="#5c5c5c"/><rect x="24" y="429.0" width="95.60" height="1.75" fill="#5f5fe3"/><rect x="146" y="429.0" width="68.00" height="1.75" fill="#5f5fe3"/><rect x="218.8" y="429.0" width="64.20" height="1.75" fill="#5f5fe3"/><rect x="286.2" y="429.0" width="64.60" height="1.75" fill="#5f5fe3"/><rect x="354.6" y="429.0" width="32.80" height="1.75" fill="#b0b0b0"/><rect x="391.5" y="429.0" width="33.00" height="1.75" fill="#b0b0b0"/><rect x="428.8" y="429.0" width="81.20" height="1.75" fill="#5f5fe3"/><rect x="514" y="429.0" width="82.00" height="1.75" fill="#5f5fe3"/><rect x="599.8" y="429.0" width="82.00" height="1.75" fill="#5f5fe3"/><rect x="685.5" y="429.0" width="82.10" height="1.75" fill="#5f5fe3"/><rect x="777" y="429.0" width="99.80" height="1.75" fill="#5f5fe3"/><rect x="887" y="429.0" width="79.60" height="1.75" fill="#5f5fe3"/><rect x="976.3" y="429.0" width="59.00" height="1.75" fill="#5f5fe3"/><rect x="1039" y="429.0" width="41.00" height="1.75" fill="#5c5c5c"/><rect x="24" y="453.9" width="95.60" height="1.75" fill="#5f5fe3"/><rect x="146" y="453.9" width="68.00" height="1.75" fill="#5f5fe3"/><rect x="218.8" y="453.9" width="64.20" height="1.75" fill="#5f5fe3"/><rect x="286.2" y="453.9" width="64.60" height="1.75" fill="#5f5fe3"/><rect x="354.6" y="453.9" width="32.80" height="1.75" fill="#b0b0b0"/><rect x="391.5" y="453.9" width="33.00" height="1.75" fill="#b0b0b0"/><rect x="428.8" y="453.9" width="81.20" height="1.75" fill="#5f5fe3"/><rect x="514" y="453.9" width="82.00" height="1.75" fill="#5f5fe3"/><rect x="599.8" y="453.9" width="82.00" height="1.75" fill="#5f5fe3"/><rect x="685.5" y="453.9" width="82.10" height="1.75" fill="#5f5fe3"/><rect x="777" y="453.9" width="99.80" height="1.75" fill="#5f5fe3"/><rect x="887" y="453.9" width="79.60" height="1.75" fill="#5f5fe3"/><rect x="976.3" y="453.9" width="59.00" height="1.75" fill="#5f5fe3"/><rect x="1039" y="453.9" width="41.00" height="1.75" fill="#5c5c5c"/><rect x="887" y="240.0" width="79.60" height="1.6" fill="#6767d6"/><rect x="887" y="243.4" width="79.60" height="2.4" fill="#0c0cc0"/><rect x="146" y="353.1" width="68.00" height="1.6" fill="#6767d6"/><rect x="146" y="356.8" width="68.00" height="2.4" fill="#0c0cc0"/><rect x="976.3" y="353.1" width="59.00" height="1.6" fill="#6767d6"/><rect x="976.3" y="356.8" width="59.00" height="2.4" fill="#0c0cc0"/><rect x="146" y="479.6" width="68.00" height="1.6" fill="#6767d6"/><rect x="146" y="483.0" width="68.00" height="2.4" fill="#0c0cc0"/><rect x="976.3" y="479.6" width="59.00" height="1.6" fill="#6767d6"/><rect x="976.3" y="483.0" width="59.00" height="2.4" fill="#0c0cc0"/></svg>
<svg style="position:absolute;left:0;top:0" width="1111" height="520" viewBox="0 0 1111 520"><rect x="14.15" y="243.75" width="102.00" height="26.10" fill="none" stroke="#f21414" stroke-width="3.7"/></svg>
<svg style="position:absolute;left:0;top:0" width="1111" height="520" viewBox="0 0 1111 520"><rect x="7.95" y="366.65" width="101.60" height="26.00" fill="none" stroke="#f21414" stroke-width="3.7"/></svg>
<svg style="position:absolute;left:0;top:0" width="1111" height="520" viewBox="0 0 1111 520"><rect x="896.70" y="221.10" width="79.90" height="17.60" fill="none" stroke="#f21414" stroke-width="3.6"/></svg>
<div style="position:absolute;left:633px;top:432px;width:48px;height:17px;background:#ffffe1;border:1px solid #d6d6c8;border-right-color:#707070;border-bottom-color:#707070;"></div>
<div style="position:absolute;top:432px;font:normal normal 10.6px 'Liberation Sans', sans-serif;line-height:20px;white-space:nowrap;color:#111111;left:634.1px">Picture</div>
<svg style="position:absolute;left:0;top:0" width="1111" height="520" viewBox="0 0 1111 520"><line x1="0" y1="0.6" x2="1111" y2="0.6" stroke="#f6f8fc" stroke-width="1.2"/><line x1="3" y1="0.6" x2="1111" y2="0.6" stroke="#566074" stroke-width="1.2" stroke-dasharray="2 2"/><line x1="0" y1="519.3" x2="1111" y2="519.3" stroke="#f6f6f6" stroke-width="1.4"/><line x1="1" y1="519.3" x2="1111" y2="519.3" stroke="#505050" stroke-width="1.4" stroke-dasharray="2 2"/><circle cx="0" cy="0.3" r="3.5" fill="#fff" stroke="#000" stroke-width="1"/><circle cx="556.4" cy="0.3" r="3.5" fill="#fff" stroke="#000" stroke-width="1"/><circle cx="1111" cy="0.3" r="3.5" fill="#fff" stroke="#000" stroke-width="1"/><circle cx="0" cy="260.5" r="3.5" fill="#fff" stroke="#000" stroke-width="1"/><circle cx="1111" cy="260.5" r="3.5" fill="#fff" stroke="#000" stroke-width="1"/><circle cx="0" cy="519.6" r="3.5" fill="#fff" stroke="#000" stroke-width="1"/><circle cx="556.4" cy="519.6" r="3.5" fill="#fff" stroke="#000" stroke-width="1"/><circle cx="1111" cy="519.6" r="3.5" fill="#fff" stroke="#000" stroke-width="1"/></svg>
</body></html>
